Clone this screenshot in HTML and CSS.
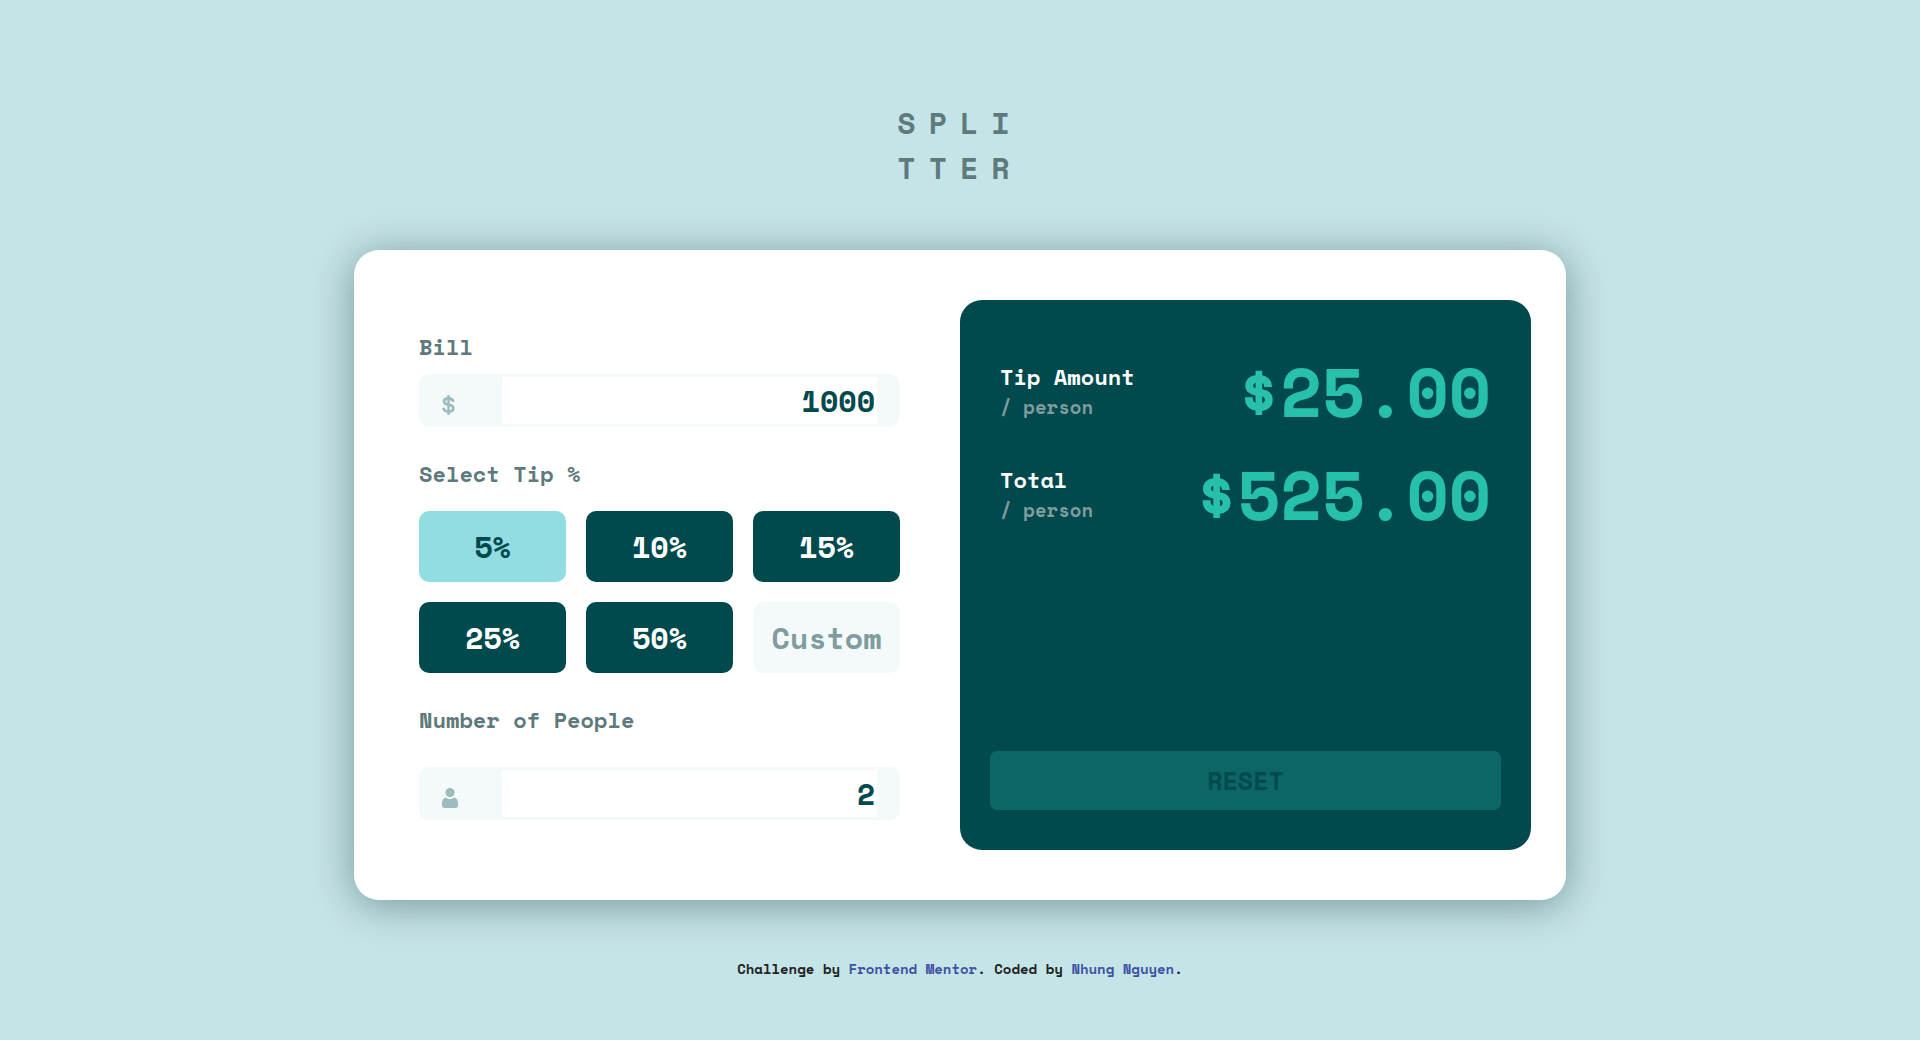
FILE: index.html
```html
<!DOCTYPE html>
<html lang="en">
<head>
  <meta charset="UTF-8">
  <meta name="viewport" content="width=device-width, initial-scale=1.0">
  <title>Tip calculator app</title>
  <link rel="stylesheet" href="styles.css">
</head>
<body>
  <h1 class="logo">SPLI<br>TTER</h1>
  <main class="card">
    <form class="form">
      <label class="label" for="bill">Bill</label>
      <div class="field field-bill">
        <span class="field-icon">
          <svg width="13" height="20" viewBox="0 0 13 20" fill="none" stroke="#9ebbbd" aria-hidden="true">
            <path stroke-width="2.8" d="M11.2 6.9C11 4.5 9.3 3.5 6.6 3.5C3.8 3.5 2 4.6 2 6.4C2 8.7 4.2 9.2 6.6 9.7C9.2 10.2 11.3 10.8 11.3 13.2C11.3 15.3 9.5 16.5 6.6 16.5C3.5 16.5 1.6 15.2 1.5 12.7"/>
            <path stroke-width="2.4" d="M6.5 0V20"/>
          </svg>
        </span>
        <input class="field-input" id="bill" type="text" inputmode="decimal" value="1000">
      </div>

      <fieldset class="tips">
        <legend class="label">Select Tip %</legend>
        <div class="tips-grid">
          <button class="tip tip-active" type="button">5%</button>
          <button class="tip" type="button">10%</button>
          <button class="tip" type="button">15%</button>
          <button class="tip" type="button">25%</button>
          <button class="tip" type="button">50%</button>
          <input class="tip tip-custom" type="text" inputmode="numeric" placeholder="Custom" aria-label="Custom tip">
        </div>
      </fieldset>

      <label class="label" for="people">Number of People</label>
      <div class="field field-people">
        <span class="field-icon">
          <svg width="16" height="20" viewBox="0 0 16 20" fill="#9ebbbd" aria-hidden="true">
            <circle cx="8" cy="4.6" r="4.6"/>
            <path d="M3.6 9.4C4.8 10.3 6.3 10.9 8 10.9C9.7 10.9 11.2 10.3 12.4 9.4C14.6 9.9 16 12 16 15V17.2C16 19 15 20 13.2 20H2.8C1 20 0 19 0 17.2V15C0 12 1.4 9.9 3.6 9.4Z"/>
          </svg>
        </span>
        <input class="field-input" id="people" type="text" inputmode="numeric" value="2">
      </div>
    </form>

    <section class="panel">
      <div class="results">
        <div class="result">
          <div>
            <h2 class="result-name">Tip Amount</h2>
            <p class="result-unit">/ person</p>
          </div>
          <output class="amount">$25.00</output>
        </div>
        <div class="result">
          <div>
            <h2 class="result-name">Total</h2>
            <p class="result-unit">/ person</p>
          </div>
          <output class="amount">$525.00</output>
        </div>
      </div>
      <button class="reset" type="button">RESET</button>
    </section>
  </main>
  <footer class="attribution">
    Challenge by <a href="#">Frontend Mentor</a>. Coded by <a href="#">Nhung Nguyen</a>.
  </footer>
</body>
</html>
```
FILE: styles.css
```css
:root {
  --dark: #00494d;
  --strong: #26c0ab;
  --label: #5e7a7d;
  --muted: #7f9c9f;
  --pale: #f4fafa;
  --page: #c5e4e7;
}

* {
  box-sizing: border-box;
  margin: 0;
  padding: 0;
}

body {
  min-height: 100vh;
  padding: 100px 20px 40px;
  display: flex;
  flex-direction: column;
  align-items: center;
  background: var(--page);
  font-family: "Space Mono", "DejaVu Sans Mono", monospace;
  font-weight: 700;
}

button,
input {
  font: inherit;
  border: 0;
}

.logo {
  margin-bottom: 60px;
  font-size: 30px;
  line-height: 45px;
  letter-spacing: 13px;
  color: var(--label);
}

.card {
  width: 100%;
  max-width: 1212px;
  padding: 50px 35px 50px 65px;
  display: grid;
  grid-template-columns: 481fr 571fr;
  gap: 60px;
  background: #fff;
  border-radius: 25px;
  box-shadow: 0 5px 40px rgba(0, 36, 40, 0.4);
}

.form {
  min-width: 0;
  padding: 30px 0;
}

.label {
  display: block;
  font-size: 22px;
  line-height: 34px;
  color: var(--label);
}

.field {
  display: flex;
  height: 53px;
  padding-right: 20px;
  background: var(--pale);
  border: 3px solid var(--pale);
  border-radius: 10px;
}

.field-bill {
  margin: 10px 0 30px;
}

.field-people {
  margin-top: 30px;
}

.field-icon {
  flex: 0 0 80px;
  display: flex;
  align-items: center;
  padding: 8px 0 0 20px;
}

.field-input {
  flex: 1;
  min-width: 0;
  padding: 0 2px;
  background: #fff;
  font-size: 30px;
  color: var(--dark);
  text-align: right;
}

.tips {
  border: 0;
  margin-bottom: 30px;
}

.tips-grid {
  margin-top: 20px;
  display: grid;
  grid-template-columns: repeat(3, minmax(0, 1fr));
  gap: 20px;
}

.tip {
  width: 100%;
  height: 71px;
  border-radius: 10px;
  background: var(--dark);
  color: #fff;
  font-size: 30px;
  text-align: center;
  cursor: pointer;
}

.tip-active {
  background: #92dde2;
  color: var(--dark);
}

.tip-custom {
  background: var(--pale);
  color: var(--dark);
}

.tip-custom::placeholder {
  color: var(--muted);
  opacity: 1;
}

.panel {
  display: flex;
  flex-direction: column;
  justify-content: space-between;
  gap: 40px;
  padding: 50px 30px 40px;
  background: var(--dark);
  border-radius: 22px;
}

.results {
  display: grid;
  gap: 20px;
  padding: 0 10px;
}

.result {
  display: flex;
  align-items: center;
  justify-content: space-between;
}

.result-name {
  font-size: 22px;
  line-height: 30px;
  color: #fff;
}

.result-unit {
  font-size: 19px;
  line-height: 30px;
  color: var(--muted);
}

.amount {
  font-size: 69px;
  line-height: 83px;
  color: var(--strong);
}

.reset {
  height: 59px;
  border-radius: 7px;
  background: #0c6666;
  color: var(--dark);
  font-size: 25px;
  cursor: pointer;
}

.attribution {
  margin-top: 59px;
  font-size: 14px;
  line-height: 20px;
  color: #222;
  text-align: center;
}

.attribution a {
  color: #3e52a3;
  text-decoration: none;
}

@media (max-width: 1000px) {
  .card {
    grid-template-columns: minmax(0, 1fr);
    padding: 30px;
  }
}
```
